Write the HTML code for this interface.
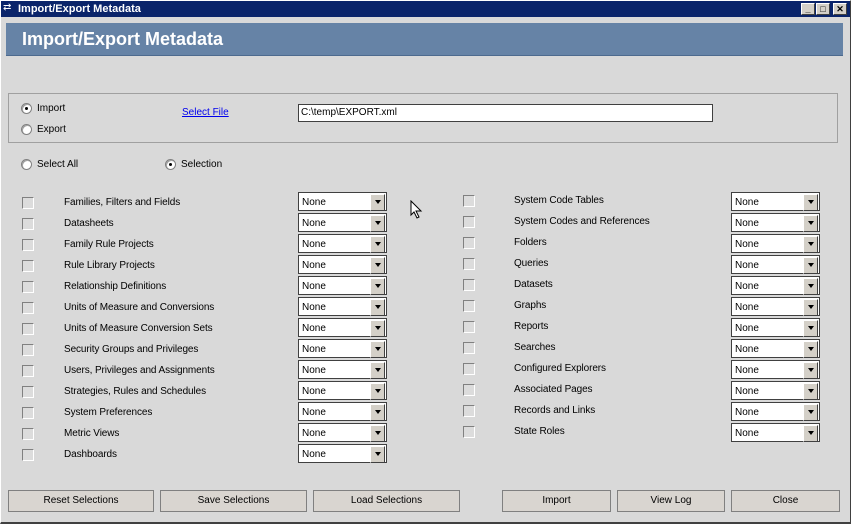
<!DOCTYPE html>
<html><head><meta charset="utf-8"><style>
*{margin:0;padding:0;box-sizing:border-box}
body{width:851px;height:524px;background:#d9d9d9;font-family:"Liberation Sans",Arial,sans-serif;font-size:10px;color:#000;position:relative;overflow:hidden}
.a{position:absolute}
.win{left:0;top:0;width:851px;height:524px;border:1px solid #fff;border-right-color:#404040;border-bottom:2px solid #404040}
.tb{left:1px;top:1px;width:849px;height:16px;background:#0a246a;color:#fff;font-weight:bold;font-size:11px;line-height:16px;padding-left:17px}
.tbtn{top:3px;width:14px;height:12px;background:#d4d0c8;border:1px solid #fff;border-right-color:#404040;border-bottom-color:#404040;font-size:9px;line-height:10px;text-align:center;color:#000;font-weight:bold}
.hdr{left:6px;top:23px;width:837px;height:33px;background:#6683a6;border-bottom:1px solid #4d6a8e;color:#fff;font-weight:bold;font-size:18px;line-height:33px;padding-left:16px}
.grp{left:8px;top:93px;width:830px;height:50px;border:1px solid #a0a0a0}
.rad{width:11px;height:11px;border-radius:50%;background:#fff;border:1px solid #808080;box-shadow:inset 1px 1px 0 #a0a0a0}
.rad.on::after{content:"";position:absolute;left:3px;top:3px;width:3px;height:3px;border-radius:50%;background:#000}
.cb{width:12px;height:12px;background:#dcdcdc;border:1px solid #fff;border-left-color:#808080;border-top-color:#808080}
.cmb{width:89px;height:19px;background:#fff;border:1px solid #404040;box-shadow:inset 0 0 0 1px #fff;padding-left:3px;line-height:19px}
.cmb::after{content:"";position:absolute;right:1px;top:1px;width:13px;height:15px;background:#d4d0c8;border:1px solid #fff;border-right-color:#404040;border-bottom-color:#404040}
.cmb i{position:absolute;right:5px;top:7px;width:0;height:0;border-left:3px solid transparent;border-right:3px solid transparent;border-top:4px solid #000;z-index:2}
.btn{height:22px;background:#d9d5d0;border:1px solid #808080;text-align:center;line-height:20px}
.l{letter-spacing:-0.1px}
</style></head><body>
<div class="a win"></div>
<div class="a tb">Import/Export Metadata</div>
<div class="a" style="left:3px;top:3px;color:#fff;font-size:10px;line-height:10px">⇄</div>
<div class="a tbtn" style="left:801px">_</div>
<div class="a tbtn" style="left:816px">□</div>
<div class="a tbtn" style="left:833px">✕</div>
<div class="a hdr">Import/Export Metadata</div>
<div class="a grp"></div>
<div class="a rad on" style="left:21px;top:103px"></div><div class="a" style="left:37px;top:103px">Import</div>
<div class="a rad" style="left:21px;top:124px"></div><div class="a" style="left:37px;top:124px">Export</div>
<div class="a" style="left:182px;top:107px;color:#0000ee;text-decoration:underline">Select File</div>
<div class="a" style="left:298px;top:104px;width:415px;height:18px;background:#fff;border:1px solid #404040;padding-left:2px;line-height:16px">C:\temp\EXPORT.xml</div>
<div class="a rad" style="left:21px;top:159px"></div><div class="a" style="left:37px;top:159px">Select All</div>
<div class="a rad on" style="left:165px;top:159px"></div><div class="a" style="left:181px;top:159px">Selection</div>

<div class="a" style="left:8px;top:490px"><div class="btn" style="width:146px">Reset Selections</div></div>
<div class="a" style="left:160px;top:490px"><div class="btn" style="width:147px">Save Selections</div></div>
<div class="a" style="left:313px;top:490px"><div class="btn" style="width:147px">Load Selections</div></div>
<div class="a" style="left:502px;top:490px"><div class="btn" style="width:109px">Import</div></div>
<div class="a" style="left:617px;top:490px"><div class="btn" style="width:108px">View Log</div></div>
<div class="a" style="left:731px;top:490px"><div class="btn" style="width:109px">Close</div></div>
<svg class="a" style="left:410px;top:200px" width="14" height="20" viewBox="0 0 14 20"><path d="M1 1 L1 15 L4 12 L7 18 L9 17 L6 11 L11 11 Z" fill="#fff" stroke="#000" stroke-width="1"/></svg>

<div class="a cb" style="left:22px;top:197px"></div><div class="a l" style="left:64px;top:197px">Families, Filters and Fields</div><div class="a cmb" style="left:298px;top:192px">None<i></i></div>
<div class="a cb" style="left:22px;top:218px"></div><div class="a l" style="left:64px;top:218px">Datasheets</div><div class="a cmb" style="left:298px;top:213px">None<i></i></div>
<div class="a cb" style="left:22px;top:239px"></div><div class="a l" style="left:64px;top:239px">Family Rule Projects</div><div class="a cmb" style="left:298px;top:234px">None<i></i></div>
<div class="a cb" style="left:22px;top:260px"></div><div class="a l" style="left:64px;top:260px">Rule Library Projects</div><div class="a cmb" style="left:298px;top:255px">None<i></i></div>
<div class="a cb" style="left:22px;top:281px"></div><div class="a l" style="left:64px;top:281px">Relationship Definitions</div><div class="a cmb" style="left:298px;top:276px">None<i></i></div>
<div class="a cb" style="left:22px;top:302px"></div><div class="a l" style="left:64px;top:302px">Units of Measure and Conversions</div><div class="a cmb" style="left:298px;top:297px">None<i></i></div>
<div class="a cb" style="left:22px;top:323px"></div><div class="a l" style="left:64px;top:323px">Units of Measure Conversion Sets</div><div class="a cmb" style="left:298px;top:318px">None<i></i></div>
<div class="a cb" style="left:22px;top:344px"></div><div class="a l" style="left:64px;top:344px">Security Groups and Privileges</div><div class="a cmb" style="left:298px;top:339px">None<i></i></div>
<div class="a cb" style="left:22px;top:365px"></div><div class="a l" style="left:64px;top:365px">Users, Privileges and Assignments</div><div class="a cmb" style="left:298px;top:360px">None<i></i></div>
<div class="a cb" style="left:22px;top:386px"></div><div class="a l" style="left:64px;top:386px">Strategies, Rules and Schedules</div><div class="a cmb" style="left:298px;top:381px">None<i></i></div>
<div class="a cb" style="left:22px;top:407px"></div><div class="a l" style="left:64px;top:407px">System Preferences</div><div class="a cmb" style="left:298px;top:402px">None<i></i></div>
<div class="a cb" style="left:22px;top:428px"></div><div class="a l" style="left:64px;top:428px">Metric Views</div><div class="a cmb" style="left:298px;top:423px">None<i></i></div>
<div class="a cb" style="left:22px;top:449px"></div><div class="a l" style="left:64px;top:449px">Dashboards</div><div class="a cmb" style="left:298px;top:444px">None<i></i></div>

<div class="a cb" style="left:463px;top:195px"></div><div class="a l" style="left:514px;top:195px">System Code Tables</div><div class="a cmb" style="left:731px;top:192px">None<i></i></div>
<div class="a cb" style="left:463px;top:216px"></div><div class="a l" style="left:514px;top:216px">System Codes and References</div><div class="a cmb" style="left:731px;top:213px">None<i></i></div>
<div class="a cb" style="left:463px;top:237px"></div><div class="a l" style="left:514px;top:237px">Folders</div><div class="a cmb" style="left:731px;top:234px">None<i></i></div>
<div class="a cb" style="left:463px;top:258px"></div><div class="a l" style="left:514px;top:258px">Queries</div><div class="a cmb" style="left:731px;top:255px">None<i></i></div>
<div class="a cb" style="left:463px;top:279px"></div><div class="a l" style="left:514px;top:279px">Datasets</div><div class="a cmb" style="left:731px;top:276px">None<i></i></div>
<div class="a cb" style="left:463px;top:300px"></div><div class="a l" style="left:514px;top:300px">Graphs</div><div class="a cmb" style="left:731px;top:297px">None<i></i></div>
<div class="a cb" style="left:463px;top:321px"></div><div class="a l" style="left:514px;top:321px">Reports</div><div class="a cmb" style="left:731px;top:318px">None<i></i></div>
<div class="a cb" style="left:463px;top:342px"></div><div class="a l" style="left:514px;top:342px">Searches</div><div class="a cmb" style="left:731px;top:339px">None<i></i></div>
<div class="a cb" style="left:463px;top:363px"></div><div class="a l" style="left:514px;top:363px">Configured Explorers</div><div class="a cmb" style="left:731px;top:360px">None<i></i></div>
<div class="a cb" style="left:463px;top:384px"></div><div class="a l" style="left:514px;top:384px">Associated Pages</div><div class="a cmb" style="left:731px;top:381px">None<i></i></div>
<div class="a cb" style="left:463px;top:405px"></div><div class="a l" style="left:514px;top:405px">Records and Links</div><div class="a cmb" style="left:731px;top:402px">None<i></i></div>
<div class="a cb" style="left:463px;top:426px"></div><div class="a l" style="left:514px;top:426px">State Roles</div><div class="a cmb" style="left:731px;top:423px">None<i></i></div>
</body></html>
